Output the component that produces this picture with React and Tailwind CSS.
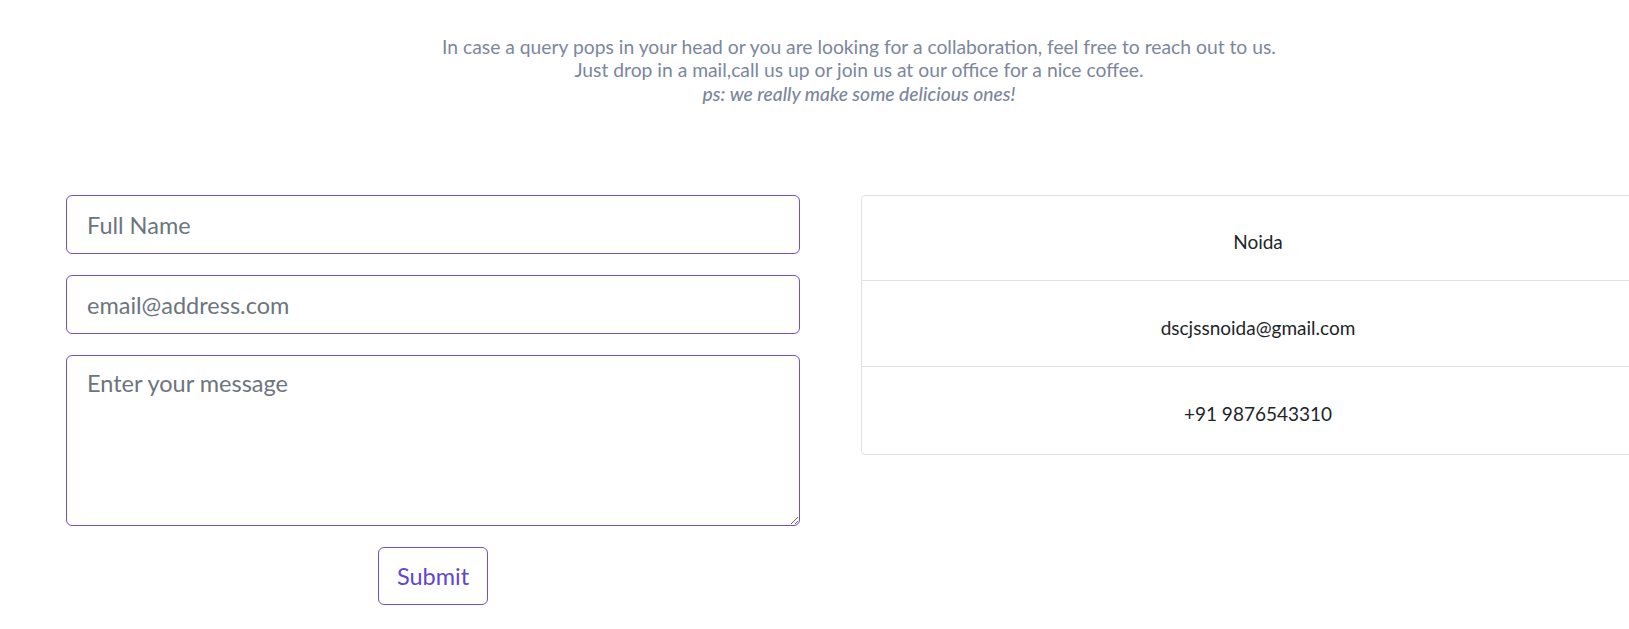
import React from "react";

export default function App() {
  const font = { fontFamily: "Lato, 'Open Sans', sans-serif" };
  return (
    <div className="w-full overflow-hidden bg-white" style={font}>
      <div className="w-[1718px]">
        <div className="pt-[35px] text-center text-[19.3px] leading-[23.4px] text-[#7b879c]">
          <p>In case a query pops in your head or you are looking for a collaboration, feel free to reach out to us.</p>
          <p>Just drop in a mail,call us up or join us at our office for a nice coffee.</p>
          <p className="italic font-medium">ps: we really make some delicious ones!</p>
        </div>
        <div className="mt-[90px] flex gap-[61px] pl-[66px]">
          <form className="flex w-[734px] flex-col" onSubmit={(e) => e.preventDefault()}>
            <input
              type="text"
              placeholder="Full Name"
              className="h-[59px] w-full rounded-[6px] border border-[#6e4fd6] px-[20px] text-[23.5px] text-[#212529] outline-none placeholder:text-[#6c757d]"
            />
            <input
              type="email"
              placeholder="email@address.com"
              className="mt-[21px] h-[59px] w-full rounded-[6px] border border-[#6e4fd6] px-[20px] text-[23.5px] text-[#212529] outline-none placeholder:text-[#6c757d]"
            />
            <textarea
              placeholder="Enter your message"
              className="mt-[21px] h-[171px] w-full resize-y rounded-[6px] border border-[#6e4fd6] px-[20px] py-[11px] text-[23.5px] leading-[1.4] text-[#212529] outline-none placeholder:text-[#6c757d]"
            />
            <div className="mt-[21px] flex justify-center">
              <button
                type="submit"
                className="h-[58px] w-[110px] rounded-[6px] border border-[#6e4fd6] bg-white text-[23.5px] text-[#6245d2]"
              >
                Submit
              </button>
            </div>
          </form>
          <div className="w-[794px] self-start rounded-[4px] border border-[#dee2e6] text-[19px] text-[#212529]">
            <div className="flex h-[85px] items-center justify-center border-b border-[#dee2e6] pt-[9px]">Noida</div>
            <div className="flex h-[86px] items-center justify-center border-b border-[#dee2e6] pt-[9px]">dscjssnoida@gmail.com</div>
            <div className="flex h-[87px] items-center justify-center pt-[7px]">+91 9876543310</div>
          </div>
        </div>
      </div>
    </div>
  );
}
